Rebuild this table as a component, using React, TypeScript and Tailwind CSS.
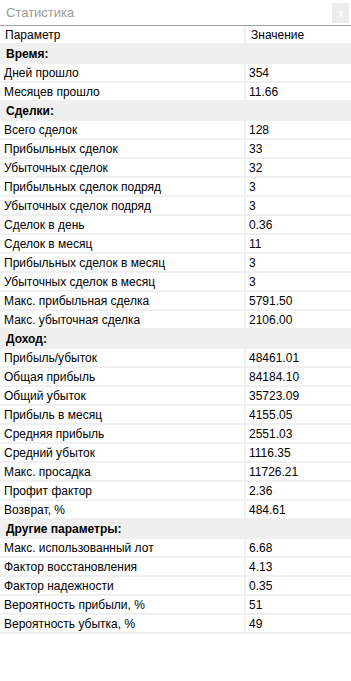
const sections: { title: string; rows: [string, string][] }[] = [
  {
    title: "Время:",
    rows: [
      ["Дней прошло", "354"],
      ["Месяцев прошло", "11.66"],
    ],
  },
  {
    title: "Сделки:",
    rows: [
      ["Всего сделок", "128"],
      ["Прибыльных сделок", "33"],
      ["Убыточных сделок", "32"],
      ["Прибыльных сделок подряд", "3"],
      ["Убыточных сделок подряд", "3"],
      ["Сделок в день", "0.36"],
      ["Сделок в месяц", "11"],
      ["Прибыльных сделок в месяц", "3"],
      ["Убыточных сделок в месяц", "3"],
      ["Макс. прибыльная сделка", "5791.50"],
      ["Макс. убыточная сделка", "2106.00"],
    ],
  },
  {
    title: "Доход:",
    rows: [
      ["Прибыль/убыток", "48461.01"],
      ["Общая прибыль", "84184.10"],
      ["Общий убыток", "35723.09"],
      ["Прибыль в месяц", "4155.05"],
      ["Средняя прибыль", "2551.03"],
      ["Средний убыток", "1116.35"],
      ["Макс. просадка", "11726.21"],
      ["Профит фактор", "2.36"],
      ["Возврат, %", "484.61"],
    ],
  },
  {
    title: "Другие параметры:",
    rows: [
      ["Макс. использованный лот", "6.68"],
      ["Фактор восстановления", "4.13"],
      ["Фактор надежности", "0.35"],
      ["Вероятность прибыли, %", "51"],
      ["Вероятность убытка, %", "49"],
    ],
  },
];

function Row({ name, value }: { name: string; value: string }) {
  return (
    <div className="flex h-[19px] border-b-2 border-[#f0f0f0]">
      <div className="w-[244px] pl-[4px] leading-[18px]">{name}</div>
      <div className="w-[2px] bg-[#f0f0f0]" />
      <div className="flex-1 pl-[3px] leading-[18px]">{value}</div>
    </div>
  );
}

export default function App() {
  return (
    <div
      className="w-[351px] h-[681px] bg-white text-black text-[12px] overflow-hidden"
      style={{ fontFamily: '"Liberation Sans", Arial, sans-serif' }}
    >
      {/* Title bar */}
      <div className="relative h-[26px] border-b border-[#a0a0a0]">
        <div className="pl-[6px] pt-[3px] text-[13px] text-[#9a9a9a]">Статистика</div>
        <div className="absolute right-[2px] top-[3px] w-[17px] h-[20px] bg-[#ececec] flex items-center justify-center text-[10px] text-white">
          x
        </div>
      </div>

      {/* Header */}
      <div className="flex h-[19px] border-b-2 border-[#f0f0f0]">
        <div className="w-[244px] pl-[5px] leading-[18px]">Параметр</div>
        <div className="w-[2px] bg-[#f0f0f0]" />
        <div className="flex-1 pl-[5px] leading-[18px]">Значение</div>
      </div>

      {sections.map((s) => (
        <div key={s.title}>
          <div className="h-[19px] bg-[#f0f0f0] pl-[6px] leading-[19px] font-bold">{s.title}</div>
          {s.rows.map(([n, v]) => (
            <Row key={n} name={n} value={v} />
          ))}
        </div>
      ))}
    </div>
  );
}
